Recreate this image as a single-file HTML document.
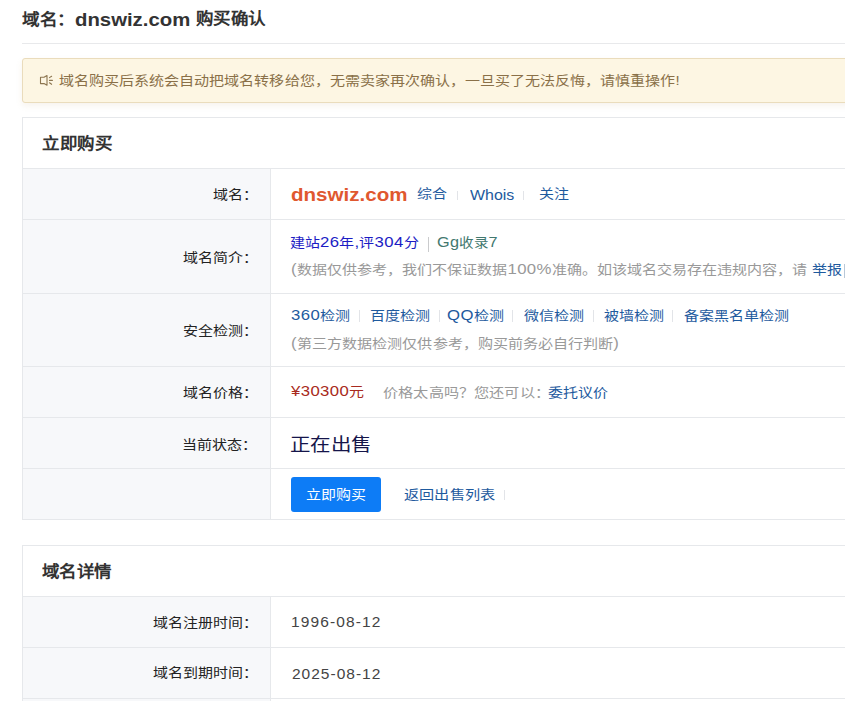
<!DOCTYPE html>
<html lang="zh-CN"><head><meta charset="utf-8">
<style>
*{box-sizing:border-box;margin:0;padding:0}
html,body{width:845px;height:701px;overflow:hidden;background:#fff}
body{font-family:"Liberation Sans",sans-serif;font-size:14px;color:#333;position:relative}
.t{position:absolute;white-space:nowrap;line-height:20px}
.b{position:absolute}
.t i{font-style:normal;font-size:14.5px;letter-spacing:0.35px}
.sep{position:absolute;width:1px;background:#e2e4e8}
</style></head><body>
<div class="b" style="left:22px;top:43px;width:823px;height:1px;background:#e8e9eb"></div>
<div class="b" style="left:22px;top:58px;width:840px;height:45px;background:#fdf6e3;border:1px solid #eadcbc;border-radius:3px;box-shadow:0 3px 6px rgba(190,160,110,0.12)"></div>
<svg class="b" style="left:36px;top:70px" width="24" height="20" viewBox="0 0 24 20"><g fill="none" stroke="#8d7650" stroke-width="1.1" stroke-linecap="round" stroke-linejoin="round"><path d="M4.5 7.3H8L11 5.6V15.3L8 13.6H4.5Z"/><path d="M13.5 7.6L15.6 6.3M13.5 10.4H16.4M13.5 12.8L15.6 14.3"/></g></svg>
<div class="b" style="left:22px;top:117px;width:830px;height:403px;border:1px solid #e6e8eb;border-right:none;background:#fff"></div>
<div class="b" style="left:23px;top:169px;width:247px;height:350px;background:#f7f8fa"></div>
<div class="b" style="left:270px;top:168px;width:1px;height:351px;background:#e6e8eb"></div>
<div class="b" style="left:23px;top:168px;width:822px;height:1px;background:#e6e8eb"></div>
<div class="b" style="left:23px;top:219px;width:822px;height:1px;background:#e6e8eb"></div>
<div class="b" style="left:23px;top:293px;width:822px;height:1px;background:#e6e8eb"></div>
<div class="b" style="left:23px;top:366px;width:822px;height:1px;background:#e6e8eb"></div>
<div class="b" style="left:23px;top:417px;width:822px;height:1px;background:#e6e8eb"></div>
<div class="b" style="left:23px;top:468px;width:822px;height:1px;background:#e6e8eb"></div>
<div class="b" style="left:22px;top:545px;width:830px;height:216px;border:1px solid #e6e8eb;border-right:none;background:#fff"></div>
<div class="b" style="left:23px;top:597px;width:247px;height:163px;background:#f7f8fa"></div>
<div class="b" style="left:270px;top:596px;width:1px;height:164px;background:#e6e8eb"></div>
<div class="b" style="left:23px;top:596px;width:822px;height:1px;background:#e6e8eb"></div>
<div class="b" style="left:23px;top:647px;width:822px;height:1px;background:#e6e8eb"></div>
<div class="b" style="left:23px;top:698px;width:822px;height:1px;background:#e6e8eb"></div>
<div class="b" style="left:844px;top:264px;width:1px;height:14px;background:#b8c8d8"></div>
<div class="b" style="left:291px;top:477px;width:90px;height:35px;background:#0d7cf6;border-radius:3px"></div>
<div class="sep" style="left:428px;top:237px;height:15px;background:#cacbcd"></div>
<div class="sep" style="left:457px;top:191px;height:9px"></div>
<div class="sep" style="left:523px;top:191px;height:9px"></div>
<div class="sep" style="left:359px;top:310px;height:12px"></div>
<div class="sep" style="left:439px;top:310px;height:12px"></div>
<div class="sep" style="left:512px;top:310px;height:12px"></div>
<div class="sep" style="left:593px;top:310px;height:12px"></div>
<div class="sep" style="left:672px;top:310px;height:12px"></div>
<div class="sep" style="left:504px;top:490px;height:10px"></div>
<div class="t" style="left:22.00px;top:9.50px;font-size:16px;letter-spacing:0.000px;color:#333;font-weight:bold;transform:scaleX(1.1008);transform-origin:0 0">域名：</div>
<div class="t" style="left:75.00px;top:10.00px;font-size:18px;letter-spacing:0.000px;color:#333;font-weight:bold;transform:scaleX(1.1297);transform-origin:0 0">dnswiz.com</div>
<div class="t" style="left:195.80px;top:9.00px;font-size:16px;letter-spacing:0.000px;color:#333;font-weight:bold;transform:scaleX(1.0919);transform-origin:0 0">购买确认</div>
<div class="t" style="left:59.00px;top:70.50px;font-size:13px;letter-spacing:0.000px;color:#8a7048;transform:scaleX(1.1565);transform-origin:0 0">域名购买后系统会自动把域名转移给您，无需卖家再次确认，一旦买了无法反悔，请慎重操作!</div>
<div class="t" style="left:42.00px;top:133.50px;font-size:16px;letter-spacing:0.000px;color:#333;font-weight:bold;transform:scaleX(1.0938);transform-origin:0 0">立即购买</div>
<div class="t" style="left:213.00px;top:185.10px;font-size:13px;letter-spacing:0.000px;color:#222;transform:scaleX(1.1538);transform-origin:0 0">域名：</div>
<div class="t" style="left:290.80px;top:184.90px;font-size:18px;letter-spacing:0.000px;color:#e0582f;font-weight:bold;transform:scaleX(1.1420);transform-origin:0 0">dnswiz.com</div>
<div class="t" style="left:417.30px;top:184.40px;font-size:13px;letter-spacing:0.000px;color:#1e5a9e;transform:scaleX(1.1538);transform-origin:0 0">综合</div>
<div class="t" style="left:469.80px;top:185.40px;font-size:14.5px;letter-spacing:0.000px;color:#1e5a9e;transform:scaleX(1.1000);transform-origin:0 0">Whois</div>
<div class="t" style="left:539.00px;top:184.40px;font-size:13px;letter-spacing:0.000px;color:#1e5a9e;transform:scaleX(1.1538);transform-origin:0 0">关注</div>
<div class="t" style="left:182.75px;top:247.60px;font-size:13px;letter-spacing:0.000px;color:#222;transform:scaleX(1.1538);transform-origin:0 0">域名简介：</div>
<div class="t" style="left:290.00px;top:231.50px;font-size:13px;letter-spacing:0.000px;color:#1c1cc4;transform:scaleX(1.1538);transform-origin:0 0">建站<i>26</i>年<i>,</i>评<i>304</i>分</div>
<div class="t" style="left:436.80px;top:231.50px;font-size:13px;letter-spacing:0.000px;color:#42786f;transform:scaleX(1.1200);transform-origin:0 0"><i>Gg</i>收录<i>7</i></div>
<div class="t" style="left:291.00px;top:258.50px;font-size:13px;letter-spacing:0.000px;color:#999;transform:scaleX(1.1561);transform-origin:0 0"><i>(</i>数据仅供参考，我们不保证数据<i>100%</i>准确。如该域名交易存在违规内容，请</div>
<div class="t" style="left:812.00px;top:260.00px;font-size:13px;letter-spacing:0.000px;color:#1e5a9e;transform:scaleX(1.1538);transform-origin:0 0">举报<span style="color:#8aa;margin-left:3px">]</span></div>
<div class="t" style="left:182.50px;top:320.70px;font-size:13px;letter-spacing:0.000px;color:#222;transform:scaleX(1.1538);transform-origin:0 0">安全检测：</div>
<div class="t" style="left:290.50px;top:305.10px;font-size:13px;letter-spacing:0.000px;color:#1e5a9e;transform:scaleX(1.1538);transform-origin:0 0"><i>360</i>检测</div>
<div class="t" style="left:369.50px;top:306.10px;font-size:13px;letter-spacing:0.000px;color:#1e5a9e;transform:scaleX(1.1538);transform-origin:0 0">百度检测</div>
<div class="t" style="left:447.20px;top:304.60px;font-size:13px;letter-spacing:0.000px;color:#1e5a9e;transform:scaleX(1.1538);transform-origin:0 0"><i>QQ</i>检测</div>
<div class="t" style="left:524.00px;top:306.10px;font-size:13px;letter-spacing:0.000px;color:#1e5a9e;transform:scaleX(1.1538);transform-origin:0 0">微信检测</div>
<div class="t" style="left:604.00px;top:306.10px;font-size:13px;letter-spacing:0.000px;color:#1e5a9e;transform:scaleX(1.1538);transform-origin:0 0">被墙检测</div>
<div class="t" style="left:683.80px;top:306.10px;font-size:13px;letter-spacing:0.000px;color:#1e5a9e;transform:scaleX(1.1538);transform-origin:0 0">备案黑名单检测</div>
<div class="t" style="left:291.20px;top:332.50px;font-size:13px;letter-spacing:0.000px;color:#999;transform:scaleX(1.1581);transform-origin:0 0"><i>(</i>第三方数据检测仅供参考，购买前务必自行判断<i>)</i></div>
<div class="t" style="left:183.00px;top:382.95px;font-size:13px;letter-spacing:0.000px;color:#222;transform:scaleX(1.1538);transform-origin:0 0">域名价格：</div>
<div class="t" style="left:290.70px;top:381.30px;font-size:13px;letter-spacing:0.000px;color:#a82a20;transform:scaleX(1.1538);transform-origin:0 0"><i>¥30300</i>元</div>
<div class="t" style="left:382.80px;top:382.80px;font-size:13px;letter-spacing:0.000px;color:#999;transform:scaleX(1.1675);transform-origin:0 0">价格太高吗？您还可以：</div>
<div class="t" style="left:547.50px;top:382.80px;font-size:13px;letter-spacing:0.000px;color:#1e5a9e;transform:scaleX(1.1538);transform-origin:0 0">委托议价</div>
<div class="t" style="left:182.00px;top:434.55px;font-size:13px;letter-spacing:0.000px;color:#222;transform:scaleX(1.1538);transform-origin:0 0">当前状态：</div>
<div class="t" style="left:290.00px;top:435.10px;font-size:18px;letter-spacing:0.000px;color:#15154a;transform:scaleX(1.1376);transform-origin:0 0">正在出售</div>
<div class="t" style="left:306.30px;top:485.30px;font-size:13px;letter-spacing:0.000px;color:#fff;transform:scaleX(1.1538);transform-origin:0 0">立即购买</div>
<div class="t" style="left:404.00px;top:485.20px;font-size:13px;letter-spacing:0.000px;color:#1e5a9e;transform:scaleX(1.1668);transform-origin:0 0">返回出售列表</div>
<div class="t" style="left:42.00px;top:562.40px;font-size:16px;letter-spacing:0.000px;color:#333;font-weight:bold;transform:scaleX(1.0926);transform-origin:0 0">域名详情</div>
<div class="t" style="left:152.80px;top:613.10px;font-size:13px;letter-spacing:0.000px;color:#222;transform:scaleX(1.1538);transform-origin:0 0">域名注册时间：</div>
<div class="t" style="left:291.00px;top:612.30px;font-size:15.5px;letter-spacing:1.111px;color:#444">1996-08-12</div>
<div class="t" style="left:152.80px;top:663.00px;font-size:13px;letter-spacing:0.000px;color:#222;transform:scaleX(1.1538);transform-origin:0 0">域名到期时间：</div>
<div class="t" style="left:292.00px;top:663.50px;font-size:15.5px;letter-spacing:1.000px;color:#444">2025-08-12</div>
</body></html>
